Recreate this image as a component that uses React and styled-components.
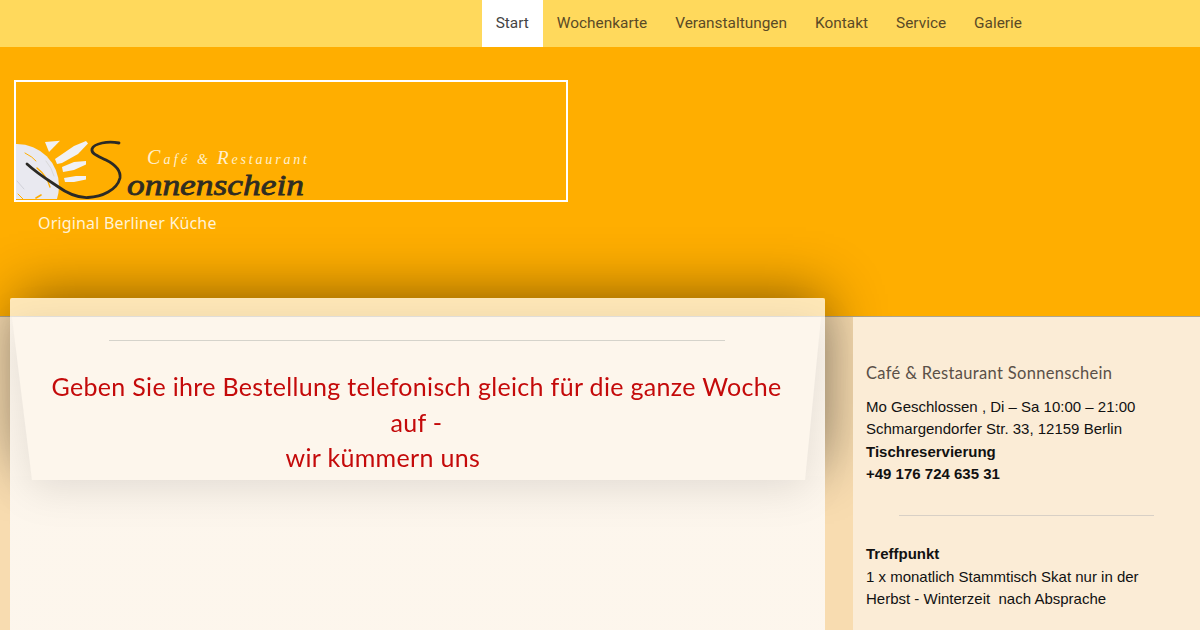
import React from "react";
import styled, { createGlobalStyle } from "styled-components";

const GlobalStyle = createGlobalStyle`
  html, body {
    margin: 0;
    padding: 0;
    height: 100%;
    overflow: hidden;
    background-color: #f8dcb0;
    font-family: "Liberation Sans", Arial, sans-serif;
  }
`;

const Page = styled.div`
  min-height: 630px;
`;

const NavBar = styled.nav`
  display: flex;
  justify-content: flex-end;
  height: 47px;
  padding-right: 164px;
  background-color: #ffd95c;
`;

const NavItem = styled.a`
  display: flex;
  align-items: center;
  padding: 0 14px 2px;
  font-family: "Roboto", sans-serif;
  font-size: 15.4px;
  color: ${(props) => (props.active ? "#444444" : "#5a4a26")};
  background-color: ${(props) => (props.active ? "#ffffff" : "transparent")};
`;

const Hero = styled.header`
  height: 236px;
  padding: 33px 0 0 14px;
  background-color: #ffae00;
  border-bottom: 1px solid #b0a68f;
`;

const LogoFrame = styled.div`
  display: flex;
  align-items: flex-end;
  width: 550px;
  height: 118px;
  border: 2px solid #ffffff;
`;

const LogoArt = styled.svg`
  display: block;
  overflow: visible;
`;

const Tagline = styled.p`
  margin: 11px 0 0 24px;
  font-family: "Noto Sans", sans-serif;
  font-size: 16px;
  line-height: 20px;
  letter-spacing: 0.17px;
  color: #fff3d6;
`;

const Content = styled.div`
  display: grid;
  grid-template-columns: 815px 347px;
  column-gap: 28px;
  padding-left: 10px;
  margin-top: -19px;
  min-height: 332px;
`;

const MainColumn = styled.main`
  position: relative;
  z-index: 1;

  &::before {
    content: "";
    position: absolute;
    z-index: -1;
    top: 0;
    left: 0;
    right: 0;
    height: 178px;
    box-shadow: 4px -8px 55px -4px rgba(0, 0, 0, 0.46);
  }
`;

const Card = styled.section`
  min-height: 332px;
  padding-top: 19px;
  border-radius: 2px 2px 0 0;
  background: linear-gradient(
    rgba(255, 255, 255, 0.72) 19px,
    rgba(253, 247, 239, 0.96) 19px
  );
`;

const BannerShadow = styled.div`
  filter: drop-shadow(0 8px 20px rgba(0, 0, 0, 0.1));
`;

const Banner = styled.div`
  height: 163px;
  padding-top: 23px;
  box-sizing: border-box;
  background-color: #fdf6ec;
  clip-path: polygon(2px 0, 811px 0, 795px 100%, 22px 100%);
`;

const Rule = styled.hr`
  width: 616px;
  height: 1px;
  margin: 0 0 0 99px;
  border: 0;
  background-color: ${(props) => props.color};
`;

const Heading = styled.h1`
  margin: 28px 0 0;
  padding-right: 2px;
  font-family: "Lato", sans-serif;
  font-size: 25px;
  font-weight: 400;
  line-height: 35.5px;
  letter-spacing: 0.33px;
  text-align: center;
  color: #c40a0a;
`;

const Sidebar = styled.aside`
  position: relative;
  z-index: 2;
  margin-top: 19px;
  padding: 44px 0 0 13px;
  background-color: #fbecd6;
`;

const SideTitle = styled.h2`
  margin: 0 0 10.5px;
  font-family: "Lato", sans-serif;
  font-size: 16.5px;
  font-weight: 400;
  line-height: 24px;
  letter-spacing: 0.33px;
  color: #5a5048;
`;

const SideText = styled.p`
  margin: 0;
  font-size: 15px;
  line-height: 22.5px;
  color: #111111;
`;

const SideRule = styled(Rule)`
  width: 255px;
  margin: 29.5px 0 27px 33px;
`;

const Logo = () => (
  <LogoArt width="292" height="60" viewBox="0 0 292 60" role="img" aria-label="Café & Restaurant Sonnenschein">
    <defs>
      <clipPath id="sun-clip">
        <rect x="0" y="0" width="60" height="59" />
      </clipPath>
    </defs>
    <g clipPath="url(#sun-clip)">
      <circle cx="1" cy="46" r="42" fill="#e9e9f0" />
      <g stroke="#ffae00" strokeWidth="1" fill="none" strokeLinecap="round">
        <path d="M9 13 Q 17 17 20 21" />
        <path d="M21 28 Q 31 36 34 47" strokeWidth="1.4" />
        <path d="M30 21 Q 36 28 38 36" stroke="#d9d9d9" />
        <path d="M1 41 L 8 49" stroke="#d0d0d8" />
        <path d="M2 54 L 7 59" />
        <path d="M20 58 L 25 55" strokeWidth="1.6" />
      </g>
    </g>
    <path d="M29 2 L44 0.7 L33 12 Z" fill="#f1f1f4" />
    <path d="M41 24 L39 19 L58 6 L70 1 L72 3.5 L62 14 L46 23 Z" fill="#f1f1f4" />
    <path d="M47 32 L46 27 L58 22 L70 21 L70 24.5 L58 30 Z" fill="#f1f1f4" />
    <path d="M49 42 L48 38 L60 36 L70 36 L70 39.5 L58 42 Z" fill="#f1f1f4" />
    <path
      d="M11 24 C 22 34 32 40 41 46 C 52 54 62 58 72 57.5 C 86 57 101 50 104 38 C 105 30 98 24 90 20 C 82 16 75 14 76 9 C 78 3 92 1 103 3"
      fill="none"
      stroke="#2b2a26"
      strokeWidth="2.8"
      strokeLinecap="round"
    />
    <text
      x="111"
      y="55"
      fontFamily="'Liberation Serif', serif"
      fontStyle="italic"
      fontSize="30"
      textLength="177"
      lengthAdjust="spacingAndGlyphs"
      fill="#2f2c22"
      stroke="#2f2c22"
      strokeWidth="0.8"
    >
      onnenschein
    </text>
    <text
      x="131"
      y="24"
      fontFamily="'Liberation Serif', serif"
      fontStyle="italic"
      fontSize="14"
      textLength="61"
      lengthAdjust="spacing"
      fill="#fff0cc"
    >
      <tspan fontSize="20">C</tspan>afé &amp;
    </text>
    <text
      x="201"
      y="24"
      fontFamily="'Liberation Serif', serif"
      fontStyle="italic"
      fontSize="14"
      textLength="90"
      lengthAdjust="spacing"
      fill="#fff0cc"
    >
      <tspan fontSize="19">R</tspan>estaurant
    </text>
  </LogoArt>
);

const navItems = ["Start", "Wochenkarte", "Veranstaltungen", "Kontakt", "Service", "Galerie"];

const App = () => {
  return (
    <Page>
      <GlobalStyle />
      <NavBar>
        {navItems.map((item, index) => (
          <NavItem key={item} active={index === 0 ? true : undefined}>
            {item}
          </NavItem>
        ))}
      </NavBar>
      <Hero>
        <LogoFrame>
          <Logo />
        </LogoFrame>
        <Tagline>Original Berliner Küche</Tagline>
      </Hero>
      <Content>
        <MainColumn>
          <Card>
            <BannerShadow>
              <Banner>
                <Rule color="#d5d3cb" />
                <Heading>
                  Geben Sie ihre Bestellung telefonisch gleich für die ganze Woche
                  <br />
                  auf -
                  <br />
                  wir kümmern uns&nbsp;&nbsp;&nbsp;&nbsp;&nbsp;&nbsp;&nbsp;&nbsp;&nbsp;&nbsp;
                </Heading>
              </Banner>
            </BannerShadow>
          </Card>
        </MainColumn>
        <Sidebar>
          <SideTitle>Café &amp; Restaurant Sonnenschein</SideTitle>
          <SideText>
            Mo Geschlossen , Di – Sa 10:00 – 21:00
            <br />
            Schmargendorfer Str. 33, 12159 Berlin
            <br />
            <strong>Tischreservierung</strong>
            <br />
            <strong>+49 176 724 635 31</strong>
          </SideText>
          <SideRule color="#d8d0c6" />
          <SideText>
            <strong>Treffpunkt</strong>
            <br />1 x monatlich Stammtisch Skat nur in der
            <br />
            Herbst - Winterzeit&nbsp; nach Absprache
          </SideText>
        </Sidebar>
      </Content>
    </Page>
  );
};

export default App;
